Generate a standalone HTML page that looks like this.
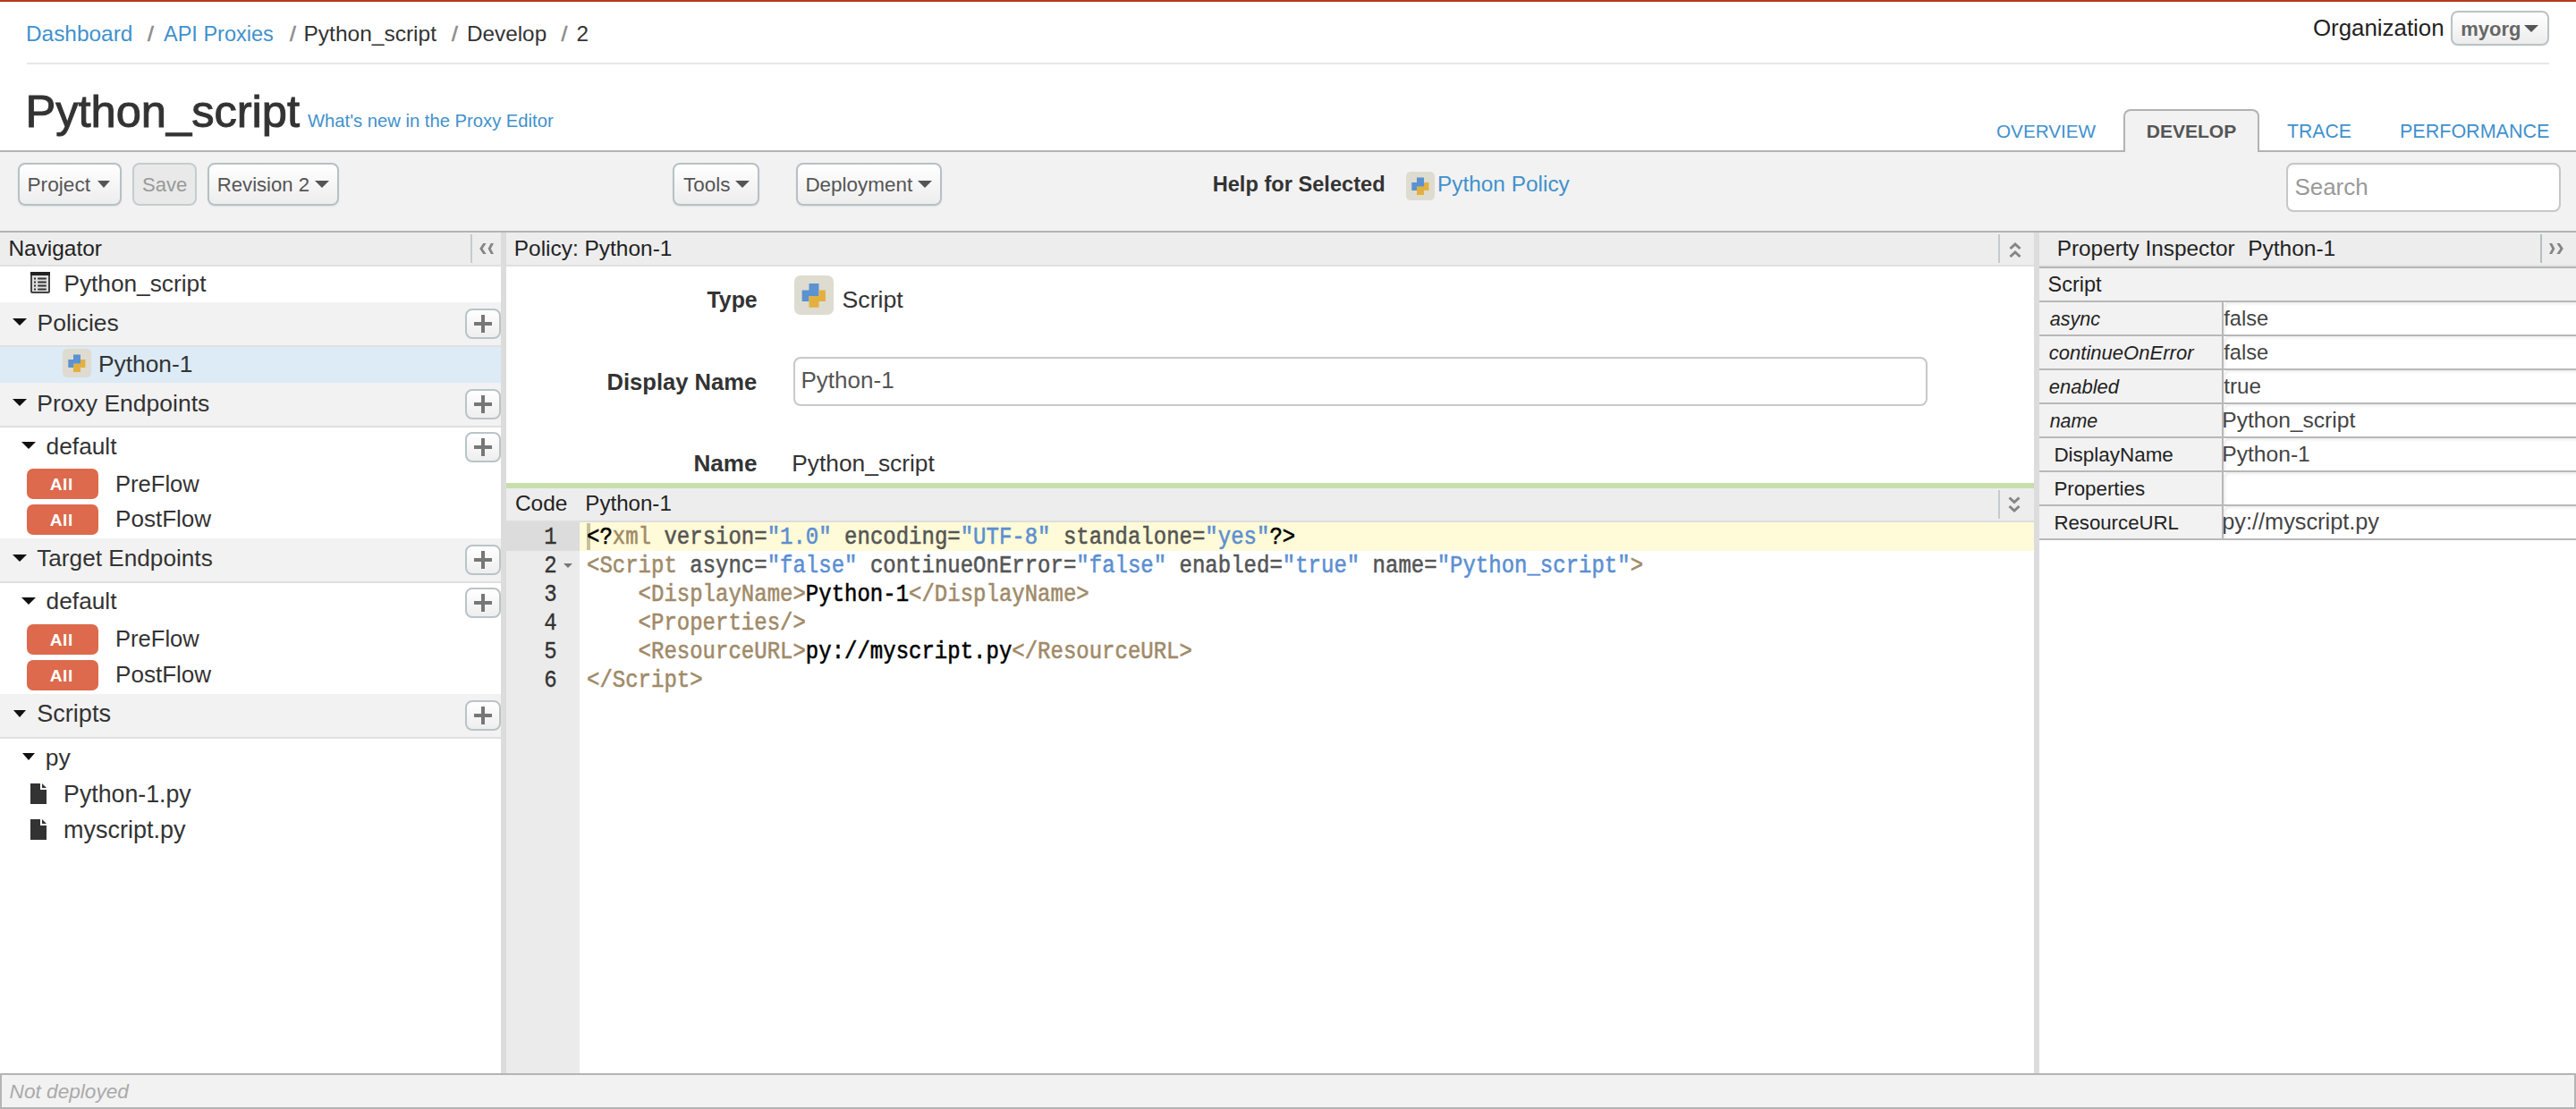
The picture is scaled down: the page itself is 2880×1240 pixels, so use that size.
<!DOCTYPE html><html><head><meta charset="utf-8"><style>
html,body{margin:0;padding:0;width:2880px;height:1240px;overflow:hidden;background:#fff;position:relative}
.a{position:absolute}
.t{white-space:pre}
@media (max-width:1500px){html{zoom:0.5}}
</style></head><body>
<div class="a" style="left:0px;top:0px;width:2880px;height:2px;background:#b33a1c"></div>
<div class="a t" style="left:29.00px;top:13.00px;font-family:'Liberation Sans';font-weight:normal;font-style:normal;font-size:24.406px;line-height:49px;color:#4191cc;">Dashboard</div>
<div class="a t" style="left:183.00px;top:15.00px;font-family:'Liberation Sans';font-weight:normal;font-style:normal;font-size:23.512px;line-height:47px;color:#4191cc;">API Proxies</div>
<div class="a t" style="left:339.50px;top:13.00px;font-family:'Liberation Sans';font-weight:normal;font-style:normal;font-size:24.501px;line-height:49px;color:#333;">Python_script</div>
<div class="a t" style="left:522.00px;top:13.00px;font-family:'Liberation Sans';font-weight:normal;font-style:normal;font-size:24.300px;line-height:49px;color:#333;">Develop</div>
<div class="a t" style="left:644.60px;top:13.00px;font-family:'Liberation Sans';font-weight:normal;font-style:normal;font-size:24.300px;line-height:49px;color:#333;">2</div>
<div class="a t" style="left:165.00px;top:13.00px;font-family:'Liberation Sans';font-weight:normal;font-style:normal;font-size:24.500px;line-height:49px;color:#8c8c8c;-webkit-text-stroke-width:0.6px">/</div>
<div class="a t" style="left:324.00px;top:13.00px;font-family:'Liberation Sans';font-weight:normal;font-style:normal;font-size:24.500px;line-height:49px;color:#8c8c8c;-webkit-text-stroke-width:0.6px">/</div>
<div class="a t" style="left:505.00px;top:13.00px;font-family:'Liberation Sans';font-weight:normal;font-style:normal;font-size:24.500px;line-height:49px;color:#8c8c8c;-webkit-text-stroke-width:0.6px">/</div>
<div class="a t" style="left:627.50px;top:13.00px;font-family:'Liberation Sans';font-weight:normal;font-style:normal;font-size:24.500px;line-height:49px;color:#8c8c8c;-webkit-text-stroke-width:0.6px">/</div>
<div class="a" style="left:30px;top:70px;width:2820px;height:2px;background:#e8e8e8"></div>
<div class="a t" style="left:28.50px;top:74.00px;font-family:'Liberation Sans';font-weight:normal;font-style:normal;font-size:50.600px;line-height:101px;color:#333;-webkit-text-stroke:1px #333">Python_script</div>
<div class="a t" style="left:344.00px;top:115.00px;font-family:'Liberation Sans';font-weight:normal;font-style:normal;font-size:20.237px;line-height:40px;color:#4191cc;">What's new in the Proxy Editor</div>
<div class="a t" style="left:2586.00px;top:5.00px;font-family:'Liberation Sans';font-weight:normal;font-style:normal;font-size:25.874px;line-height:52px;color:#222;">Organization</div>
<div class="a" style="left:2740px;top:12px;width:110px;height:39px;border:2px solid #b9c3c7;border-radius:8px;background:linear-gradient(#ffffff,#ececec);box-sizing:border-box;box-shadow:0 1px 2px rgba(0,0,0,.06)"></div>
<div class="a t" style="left:2751.30px;top:11.00px;font-family:'Liberation Sans';font-weight:bold;font-style:normal;font-size:21.964px;line-height:44px;color:#666;">myorg</div>
<div class="a" style="left:2822px;top:28px;width:0;height:0;border-left:8.0px solid transparent;border-right:8.0px solid transparent;border-top:8px solid #555"></div>
<div class="a" style="left:2374px;top:122px;width:152px;height:48px;border:2px solid #b3b3b3;border-bottom:none;border-radius:8px 8px 0 0;background:#f2f2f2;box-sizing:border-box;z-index:2"></div>
<div class="a t" style="left:2232.00px;top:126.00px;font-family:'Liberation Sans';font-weight:normal;font-style:normal;font-size:20.706px;line-height:41px;color:#4191cc;">OVERVIEW</div>
<div class="a t" style="left:2399.80px;top:126.00px;font-family:'Liberation Sans';font-weight:bold;font-style:normal;font-size:21.030px;line-height:42px;color:#555;z-index:3">DEVELOP</div>
<div class="a t" style="left:2557.00px;top:126.00px;font-family:'Liberation Sans';font-weight:normal;font-style:normal;font-size:21.200px;line-height:42px;color:#4191cc;">TRACE</div>
<div class="a t" style="left:2683.00px;top:126.00px;font-family:'Liberation Sans';font-weight:normal;font-style:normal;font-size:21.522px;line-height:43px;color:#4191cc;">PERFORMANCE</div>
<div class="a" style="left:0px;top:168px;width:2880px;height:92px;background:#f2f2f2"></div>
<div class="a" style="left:0px;top:168px;width:2880px;height:2px;background:#b3b3b3"></div>
<div class="a" style="left:0px;top:258px;width:2880px;height:2px;background:#b3b3b3"></div>
<div class="a" style="left:20px;top:182px;width:116px;height:48px;border:2px solid #b5c1c5;border-radius:8px;background:linear-gradient(#ffffff,#ededed);box-sizing:border-box;box-shadow:0 1px 2px rgba(0,0,0,.07)"></div>
<div class="a t" style="left:30.50px;top:184.00px;font-family:'Liberation Sans';font-weight:normal;font-style:normal;font-size:22.665px;line-height:45px;color:#555;">Project</div>
<div class="a" style="left:108.5px;top:202px;width:0;height:0;border-left:7.75px solid transparent;border-right:7.75px solid transparent;border-top:8px solid #555"></div>
<div class="a" style="left:148px;top:182px;width:72px;height:48px;border:2px solid #c3cdd0;border-radius:8px;background:#e9e9e9;box-sizing:border-box"></div>
<div class="a t" style="left:159.00px;top:185.00px;font-family:'Liberation Sans';font-weight:normal;font-style:normal;font-size:22.000px;line-height:44px;color:#999;">Save</div>
<div class="a" style="left:232px;top:182px;width:147px;height:48px;border:2px solid #b5c1c5;border-radius:8px;background:linear-gradient(#ffffff,#ededed);box-sizing:border-box;box-shadow:0 1px 2px rgba(0,0,0,.07)"></div>
<div class="a t" style="left:242.80px;top:185.00px;font-family:'Liberation Sans';font-weight:normal;font-style:normal;font-size:22.144px;line-height:44px;color:#555;">Revision 2</div>
<div class="a" style="left:351.5px;top:202px;width:0;height:0;border-left:8.25px solid transparent;border-right:8.25px solid transparent;border-top:8px solid #555"></div>
<div class="a" style="left:752px;top:182px;width:97px;height:48px;border:2px solid #b5c1c5;border-radius:8px;background:linear-gradient(#ffffff,#ededed);box-sizing:border-box;box-shadow:0 1px 2px rgba(0,0,0,.07)"></div>
<div class="a t" style="left:764.00px;top:184.00px;font-family:'Liberation Sans';font-weight:normal;font-style:normal;font-size:22.454px;line-height:45px;color:#555;">Tools</div>
<div class="a" style="left:822px;top:202px;width:0;height:0;border-left:8.0px solid transparent;border-right:8.0px solid transparent;border-top:8px solid #555"></div>
<div class="a" style="left:890px;top:182px;width:163px;height:48px;border:2px solid #b5c1c5;border-radius:8px;background:linear-gradient(#ffffff,#ededed);box-sizing:border-box;box-shadow:0 1px 2px rgba(0,0,0,.07)"></div>
<div class="a t" style="left:900.40px;top:184.00px;font-family:'Liberation Sans';font-weight:normal;font-style:normal;font-size:22.452px;line-height:45px;color:#555;">Deployment</div>
<div class="a" style="left:1026px;top:202px;width:0;height:0;border-left:8.0px solid transparent;border-right:8.0px solid transparent;border-top:8px solid #555"></div>
<div class="a t" style="left:1355.70px;top:183.00px;font-family:'Liberation Sans';font-weight:bold;font-style:normal;font-size:23.613px;line-height:47px;color:#333;">Help for Selected</div>
<svg class="a" style="left:1572px;top:192px" width="32" height="32" viewBox="0 0 32 32"><rect x="0" y="0" width="32" height="32" rx="5.00" fill="#dedbd0"/><path d="M12 6.5h8v10.3h-8zM6.3 12H12v9H6.3z" fill="#5a92d2"/><path d="M12 16.8h8V26h-8zM20 12h5.4v9H20z" fill="#e3b03f"/></svg>
<div class="a t" style="left:1607.00px;top:181.00px;font-family:'Liberation Sans';font-weight:normal;font-style:normal;font-size:24.400px;line-height:49px;color:#4191cc;">Python Policy</div>
<div class="a" style="left:2556px;top:182px;width:307px;height:55px;border:2px solid #c7c7c7;border-radius:8px;background:#fff;box-sizing:border-box;box-shadow:inset 0 1px 2px rgba(0,0,0,.06)"></div>
<div class="a t" style="left:2565.50px;top:183.00px;font-family:'Liberation Sans';font-weight:normal;font-style:normal;font-size:25.935px;line-height:52px;color:#999;">Search</div>
<div class="a" style="left:0px;top:260px;width:560px;height:36px;background:#ededed"></div>
<div class="a" style="left:0px;top:296px;width:560px;height:2px;background:#e0e0e0"></div>
<div class="a t" style="left:9.40px;top:253.00px;font-family:'Liberation Sans';font-weight:normal;font-style:normal;font-size:24.448px;line-height:49px;color:#222;">Navigator</div>
<div class="a" style="left:526px;top:262px;width:2px;height:32px;background:#c3cbcf"></div>
<div class="a" style="left:560px;top:260px;width:6px;height:940px;background:#dcdcdc"></div>
<div class="a" style="left:566px;top:260px;width:1708px;height:36px;background:#ededed"></div>
<div class="a" style="left:566px;top:296px;width:1708px;height:2px;background:#e0e0e0"></div>
<div class="a t" style="left:574.80px;top:253.00px;font-family:'Liberation Sans';font-weight:normal;font-style:normal;font-size:24.442px;line-height:49px;color:#222;">Policy: Python-1</div>
<div class="a" style="left:2234px;top:262px;width:2px;height:32px;background:#c3cbcf"></div>
<div class="a" style="left:2274px;top:260px;width:6px;height:940px;background:#dcdcdc"></div>
<div class="a" style="left:2280px;top:260px;width:600px;height:36px;background:#ededed"></div>
<div class="a" style="left:2280px;top:296px;width:600px;height:2px;background:#e3e3e3"></div>
<div class="a" style="left:2280px;top:298px;width:600px;height:2px;background:#b5b5b5"></div>
<div class="a t" style="left:2299.70px;top:253.00px;font-family:'Liberation Sans';font-weight:normal;font-style:normal;font-size:24.375px;line-height:49px;color:#222;">Property Inspector</div>
<div class="a t" style="left:2513.20px;top:253.00px;font-family:'Liberation Sans';font-weight:normal;font-style:normal;font-size:24.500px;line-height:49px;color:#222;">Python-1</div>
<div class="a" style="left:2840px;top:262px;width:2px;height:32px;background:#b4bfc3"></div>
<svg class="a" style="left:534px;top:270px;z-index:4" width="20" height="16" viewBox="0 0 20 16"><path d="M2.2 8L6.199999999999999 2H9.6L5.6 8L9.6 14H6.199999999999999ZM11.6 8L14.8 2H18L14.8 8L18 14H14.8Z" fill="#858585"/></svg>
<svg class="a" style="left:2848px;top:270px;z-index:4" width="20" height="16" viewBox="0 0 20 16"><g transform="translate(20,0) scale(-1,1)"><path d="M2.2 8L6.199999999999999 2H9.6L5.6 8L9.6 14H6.199999999999999ZM11.6 8L14.8 2H18L14.8 8L18 14H14.8Z" fill="#858585"/></g></svg>
<svg class="a" style="left:2245px;top:270px;z-index:4" width="16" height="20" viewBox="0 0 16 20"><path d="M2.5 8L8 3L13.5 8 M2.5 17L8 12L13.5 17" fill="none" stroke="#858585" stroke-width="3"/></svg>
<svg class="a" style="left:34px;top:304px" width="22" height="24" viewBox="0 0 22 24"><rect x="1" y="1" width="20" height="22" rx="1" fill="#ddd" stroke="#444" stroke-width="2"/><rect x="0" y="0" width="22" height="4" fill="#222"/><g fill="#333"><rect x="4" y="6.5" width="2" height="2"/><rect x="8" y="6.5" width="10" height="2" rx="1"/><rect x="4" y="10.5" width="2" height="2"/><rect x="8" y="10.5" width="10" height="2" rx="1"/><rect x="4" y="14.5" width="2" height="2"/><rect x="8" y="14.5" width="10" height="2" rx="1"/><rect x="4" y="18.5" width="2" height="2"/><rect x="8" y="18.5" width="10" height="2" rx="1"/></g></svg>
<div class="a t" style="left:71.40px;top:291.00px;font-family:'Liberation Sans';font-weight:normal;font-style:normal;font-size:26.267px;line-height:53px;color:#333;">Python_script</div>
<div class="a" style="left:0px;top:338px;width:560px;height:48px;background:#f2f2f2"></div>
<div class="a" style="left:0px;top:386px;width:560px;height:2px;background:#e0e0e0"></div>
<div class="a" style="left:14px;top:355.5px;width:0;height:0;border-left:8.0px solid transparent;border-right:8.0px solid transparent;border-top:8.0px solid #111"></div>
<div class="a t" style="left:41.50px;top:335.00px;font-family:'Liberation Sans';font-weight:normal;font-style:normal;font-size:26.500px;line-height:53px;color:#333;">Policies</div>
<div class="a" style="left:520px;top:345px;width:40px;height:34px;border:2px solid #b9c4c8;border-radius:8px;background:linear-gradient(#ffffff,#eeeeee);box-sizing:border-box"></div>
<div class="a" style="left:530px;top:360.0px;width:20px;height:4.0px;background:#777"></div>
<div class="a" style="left:538px;top:352.0px;width:4px;height:20.0px;background:#777"></div>
<div class="a" style="left:0px;top:388px;width:560px;height:40px;background:#dcebf6"></div>
<svg class="a" style="left:70px;top:390px" width="32" height="32" viewBox="0 0 32 32"><rect x="0" y="0" width="32" height="32" rx="5.00" fill="#dedbd0"/><path d="M12 6.5h8v10.3h-8zM6.3 12H12v9H6.3z" fill="#5a92d2"/><path d="M12 16.8h8V26h-8zM20 12h5.4v9H20z" fill="#e3b03f"/></svg>
<div class="a t" style="left:110.00px;top:381.00px;font-family:'Liberation Sans';font-weight:normal;font-style:normal;font-size:26.320px;line-height:53px;color:#333;">Python-1</div>
<div class="a" style="left:0px;top:428px;width:560px;height:48px;background:#f2f2f2"></div>
<div class="a" style="left:0px;top:476px;width:560px;height:2px;background:#e0e0e0"></div>
<div class="a" style="left:14px;top:446px;width:0;height:0;border-left:8.0px solid transparent;border-right:8.0px solid transparent;border-top:8px solid #111"></div>
<div class="a t" style="left:41.30px;top:425.00px;font-family:'Liberation Sans';font-weight:normal;font-style:normal;font-size:26.500px;line-height:53px;color:#333;">Proxy Endpoints</div>
<div class="a" style="left:520px;top:435px;width:40px;height:34px;border:2px solid #b9c4c8;border-radius:8px;background:linear-gradient(#ffffff,#eeeeee);box-sizing:border-box"></div>
<div class="a" style="left:530px;top:450.0px;width:20px;height:4.0px;background:#777"></div>
<div class="a" style="left:538px;top:442.0px;width:4px;height:20.0px;background:#777"></div>
<div class="a" style="left:24px;top:494px;width:0;height:0;border-left:8.0px solid transparent;border-right:8.0px solid transparent;border-top:8.5px solid #111"></div>
<div class="a t" style="left:51.60px;top:473.00px;font-family:'Liberation Sans';font-weight:normal;font-style:normal;font-size:26.299px;line-height:53px;color:#333;">default</div>
<div class="a" style="left:520px;top:482.5px;width:40px;height:34.0px;border:2px solid #b9c4c8;border-radius:8px;background:linear-gradient(#ffffff,#eeeeee);box-sizing:border-box"></div>
<div class="a" style="left:530px;top:497.5px;width:20px;height:4.0px;background:#777"></div>
<div class="a" style="left:538px;top:489.5px;width:4px;height:20.0px;background:#777"></div>
<div class="a" style="left:30px;top:524px;width:80px;height:34px;background:#dd6a4c;border-radius:7px"></div>
<div class="a t" style="left:55.70px;top:523.00px;font-family:'Liberation Sans';font-weight:bold;font-style:normal;font-size:19.200px;line-height:38px;color:#fff;letter-spacing:0.5px">All</div>
<div class="a t" style="left:129.00px;top:516.00px;font-family:'Liberation Sans';font-weight:normal;font-style:normal;font-size:25.572px;line-height:51px;color:#333;">PreFlow</div>
<div class="a" style="left:30px;top:564px;width:80px;height:34px;background:#dd6a4c;border-radius:7px"></div>
<div class="a t" style="left:55.70px;top:563.00px;font-family:'Liberation Sans';font-weight:bold;font-style:normal;font-size:19.200px;line-height:38px;color:#fff;letter-spacing:0.5px">All</div>
<div class="a t" style="left:129.00px;top:554.00px;font-family:'Liberation Sans';font-weight:normal;font-style:normal;font-size:26.072px;line-height:52px;color:#333;">PostFlow</div>
<div class="a" style="left:0px;top:602px;width:560px;height:48px;background:#f2f2f2"></div>
<div class="a" style="left:0px;top:650px;width:560px;height:2px;background:#e0e0e0"></div>
<div class="a" style="left:14px;top:620px;width:0;height:0;border-left:8.0px solid transparent;border-right:8.0px solid transparent;border-top:8px solid #111"></div>
<div class="a t" style="left:41.20px;top:598.00px;font-family:'Liberation Sans';font-weight:normal;font-style:normal;font-size:26.204px;line-height:52px;color:#333;">Target Endpoints</div>
<div class="a" style="left:520px;top:609px;width:40px;height:34px;border:2px solid #b9c4c8;border-radius:8px;background:linear-gradient(#ffffff,#eeeeee);box-sizing:border-box"></div>
<div class="a" style="left:530px;top:624.0px;width:20px;height:4.0px;background:#777"></div>
<div class="a" style="left:538px;top:616.0px;width:4px;height:20.0px;background:#777"></div>
<div class="a" style="left:24px;top:667.6px;width:0;height:0;border-left:8.0px solid transparent;border-right:8.0px solid transparent;border-top:8.399999999999977px solid #111"></div>
<div class="a t" style="left:51.60px;top:646.00px;font-family:'Liberation Sans';font-weight:normal;font-style:normal;font-size:26.299px;line-height:53px;color:#333;">default</div>
<div class="a" style="left:520px;top:656.5px;width:40px;height:34.5px;border:2px solid #b9c4c8;border-radius:8px;background:linear-gradient(#ffffff,#eeeeee);box-sizing:border-box"></div>
<div class="a" style="left:530px;top:671.75px;width:20px;height:4.0px;background:#777"></div>
<div class="a" style="left:538px;top:663.75px;width:4px;height:20.0px;background:#777"></div>
<div class="a" style="left:30px;top:698px;width:80px;height:34px;background:#dd6a4c;border-radius:7px"></div>
<div class="a t" style="left:55.70px;top:697.00px;font-family:'Liberation Sans';font-weight:bold;font-style:normal;font-size:19.200px;line-height:38px;color:#fff;letter-spacing:0.5px">All</div>
<div class="a t" style="left:129.00px;top:689.00px;font-family:'Liberation Sans';font-weight:normal;font-style:normal;font-size:25.572px;line-height:51px;color:#333;">PreFlow</div>
<div class="a" style="left:30px;top:738px;width:80px;height:34px;background:#dd6a4c;border-radius:7px"></div>
<div class="a t" style="left:55.70px;top:737.00px;font-family:'Liberation Sans';font-weight:bold;font-style:normal;font-size:19.200px;line-height:38px;color:#fff;letter-spacing:0.5px">All</div>
<div class="a t" style="left:129.00px;top:728.00px;font-family:'Liberation Sans';font-weight:normal;font-style:normal;font-size:26.072px;line-height:52px;color:#333;">PostFlow</div>
<div class="a" style="left:0px;top:776px;width:560px;height:48px;background:#f2f2f2"></div>
<div class="a" style="left:0px;top:824px;width:560px;height:2px;background:#e0e0e0"></div>
<div class="a" style="left:14.5px;top:794.3px;width:0;height:0;border-left:7.75px solid transparent;border-right:7.75px solid transparent;border-top:8.0px solid #111"></div>
<div class="a t" style="left:41.20px;top:771.00px;font-family:'Liberation Sans';font-weight:normal;font-style:normal;font-size:27.104px;line-height:54px;color:#333;">Scripts</div>
<div class="a" style="left:520px;top:782.5px;width:40px;height:34.5px;border:2px solid #b9c4c8;border-radius:8px;background:linear-gradient(#ffffff,#eeeeee);box-sizing:border-box"></div>
<div class="a" style="left:530px;top:797.75px;width:20px;height:4.0px;background:#777"></div>
<div class="a" style="left:538px;top:789.75px;width:4px;height:20.0px;background:#777"></div>
<div class="a" style="left:24.6px;top:842.3px;width:0;height:0;border-left:7.699999999999999px solid transparent;border-right:7.699999999999999px solid transparent;border-top:8.200000000000045px solid #111"></div>
<div class="a t" style="left:50.70px;top:821.00px;font-family:'Liberation Sans';font-weight:normal;font-style:normal;font-size:26.500px;line-height:53px;color:#333;">py</div>
<svg class="a" style="left:34px;top:876.3px" width="18" height="23" viewBox="0 0 18 23"><path d="M0 0H11V7H18V23H0Z" fill="#333"/><path d="M13 0L18 5H13Z" fill="#333"/></svg>
<div class="a t" style="left:71.10px;top:862.00px;font-family:'Liberation Sans';font-weight:normal;font-style:normal;font-size:26.738px;line-height:53px;color:#333;">Python-1.py</div>
<svg class="a" style="left:34px;top:916.3px" width="18" height="23" viewBox="0 0 18 23"><path d="M0 0H11V7H18V23H0Z" fill="#333"/><path d="M13 0L18 5H13Z" fill="#333"/></svg>
<div class="a t" style="left:71.10px;top:901.00px;font-family:'Liberation Sans';font-weight:normal;font-style:normal;font-size:26.960px;line-height:54px;color:#333;">myscript.py</div>
<div class="a t" style="left:790.50px;top:310.00px;font-family:'Liberation Sans';font-weight:bold;font-style:normal;font-size:24.874px;line-height:50px;color:#333;">Type</div>
<svg class="a" style="left:888.4px;top:308.2px" width="44" height="44" viewBox="0 0 32 32"><rect x="0" y="0" width="32" height="32" rx="5.09" fill="#dedbd0"/><path d="M12 6.5h8v10.3h-8zM6.3 12H12v9H6.3z" fill="#5a92d2"/><path d="M12 16.8h8V26h-8zM20 12h5.4v9H20z" fill="#e3b03f"/></svg>
<div class="a t" style="left:941.50px;top:309.00px;font-family:'Liberation Sans';font-weight:normal;font-style:normal;font-size:26.698px;line-height:53px;color:#333;">Script</div>
<div class="a t" style="left:678.50px;top:402.00px;font-family:'Liberation Sans';font-weight:bold;font-style:normal;font-size:25.578px;line-height:51px;color:#333;">Display Name</div>
<div class="a" style="left:886.6px;top:398.5px;width:1268.7000000000003px;height:55.19999999999999px;border:2px solid #c9c9c9;border-radius:8px;background:#fff;box-sizing:border-box;box-shadow:inset 0 1px 2px rgba(0,0,0,.05)"></div>
<div class="a t" style="left:895.40px;top:399.00px;font-family:'Liberation Sans';font-weight:normal;font-style:normal;font-size:26.063px;line-height:52px;color:#555;">Python-1</div>
<div class="a t" style="left:775.50px;top:492.00px;font-family:'Liberation Sans';font-weight:bold;font-style:normal;font-size:26.109px;line-height:52px;color:#333;">Name</div>
<div class="a t" style="left:885.30px;top:492.00px;font-family:'Liberation Sans';font-weight:normal;font-style:normal;font-size:26.333px;line-height:53px;color:#333;">Python_script</div>
<div class="a" style="left:566px;top:540px;width:1708px;height:6px;background:#c7dfab"></div>
<div class="a" style="left:566px;top:546px;width:1708px;height:36px;background:#ededed"></div>
<div class="a" style="left:566px;top:582px;width:1708px;height:2px;background:#dedede"></div>
<div class="a t" style="left:575.90px;top:538.00px;font-family:'Liberation Sans';font-weight:normal;font-style:normal;font-size:24.471px;line-height:49px;color:#222;">Code</div>
<div class="a t" style="left:654.30px;top:539.00px;font-family:'Liberation Sans';font-weight:normal;font-style:normal;font-size:24.123px;line-height:48px;color:#222;">Python-1</div>
<div class="a" style="left:2234px;top:548px;width:2px;height:32px;background:#c3cbcf"></div>
<svg class="a" style="left:2244px;top:554px;z-index:4" width="16" height="20" viewBox="0 0 16 20"><path d="M2.5 2.5L8 7.5L13.5 2.5 M2.5 12L8 17L13.5 12" fill="none" stroke="#858585" stroke-width="3"/></svg>
<div class="a" style="left:566px;top:584px;width:82px;height:616px;background:#ebebeb"></div>
<div class="a" style="left:566px;top:584px;width:82px;height:32px;background:#dcdcdc"></div>
<div class="a" style="left:648px;top:584px;width:1626px;height:32px;background:#fffad7"></div>
<div class="a" style="left:656px;top:585px;width:4px;height:30px;background:#c5c09d"></div>
<div class="a t" style="left:608.30px;top:578.00px;font-family:'Liberation Mono';font-weight:normal;font-style:normal;font-size:24.000px;line-height:48px;color:#333;transform:scaleY(1.17);transform-origin:0 30px;-webkit-text-stroke-width:0.3px">1</div>
<div class="a t" style="left:608.30px;top:610.00px;font-family:'Liberation Mono';font-weight:normal;font-style:normal;font-size:24.000px;line-height:48px;color:#333;transform:scaleY(1.17);transform-origin:0 30px;-webkit-text-stroke-width:0.3px">2</div>
<div class="a t" style="left:608.30px;top:642.00px;font-family:'Liberation Mono';font-weight:normal;font-style:normal;font-size:24.000px;line-height:48px;color:#333;transform:scaleY(1.17);transform-origin:0 30px;-webkit-text-stroke-width:0.3px">3</div>
<div class="a t" style="left:608.30px;top:674.00px;font-family:'Liberation Mono';font-weight:normal;font-style:normal;font-size:24.000px;line-height:48px;color:#333;transform:scaleY(1.17);transform-origin:0 30px;-webkit-text-stroke-width:0.3px">4</div>
<div class="a t" style="left:608.30px;top:706.00px;font-family:'Liberation Mono';font-weight:normal;font-style:normal;font-size:24.000px;line-height:48px;color:#333;transform:scaleY(1.17);transform-origin:0 30px;-webkit-text-stroke-width:0.3px">5</div>
<div class="a t" style="left:608.30px;top:738.00px;font-family:'Liberation Mono';font-weight:normal;font-style:normal;font-size:24.000px;line-height:48px;color:#333;transform:scaleY(1.17);transform-origin:0 30px;-webkit-text-stroke-width:0.3px">6</div>
<div class="a" style="left:630px;top:630px;width:0;height:0;border-left:5.0px solid transparent;border-right:5.0px solid transparent;border-top:5.5px solid #777"></div>
<div class="a t" style="left:656px;top:586.00px;font-family:'Liberation Mono';font-size:24px;line-height:32px;-webkit-text-stroke-width:0.5px;transform:scaleY(1.15);transform-origin:0 22px"><span style="color:#000">&lt;?</span><span style="color:#a08a68">xml</span><span style="color:#555"> version=</span><span style="color:#5b8fd2">"1.0"</span><span style="color:#555"> encoding=</span><span style="color:#5b8fd2">"UTF-8"</span><span style="color:#555"> standalone=</span><span style="color:#5b8fd2">"yes"</span><span style="color:#000">?&gt;</span></div>
<div class="a t" style="left:656px;top:618.00px;font-family:'Liberation Mono';font-size:24px;line-height:32px;-webkit-text-stroke-width:0.5px;transform:scaleY(1.15);transform-origin:0 22px"><span style="color:#a08a68">&lt;Script</span><span style="color:#555"> async=</span><span style="color:#5b8fd2">"false"</span><span style="color:#555"> continueOnError=</span><span style="color:#5b8fd2">"false"</span><span style="color:#555"> enabled=</span><span style="color:#5b8fd2">"true"</span><span style="color:#555"> name=</span><span style="color:#5b8fd2">"Python_script"</span><span style="color:#a08a68">&gt;</span></div>
<div class="a t" style="left:656px;top:650.00px;font-family:'Liberation Mono';font-size:24px;line-height:32px;-webkit-text-stroke-width:0.5px;transform:scaleY(1.15);transform-origin:0 22px"><span style="color:#000">    </span><span style="color:#a08a68">&lt;DisplayName&gt;</span><span style="color:#000">Python-1</span><span style="color:#a08a68">&lt;/DisplayName&gt;</span></div>
<div class="a t" style="left:656px;top:682.00px;font-family:'Liberation Mono';font-size:24px;line-height:32px;-webkit-text-stroke-width:0.5px;transform:scaleY(1.15);transform-origin:0 22px"><span style="color:#000">    </span><span style="color:#a08a68">&lt;Properties/&gt;</span></div>
<div class="a t" style="left:656px;top:714.00px;font-family:'Liberation Mono';font-size:24px;line-height:32px;-webkit-text-stroke-width:0.5px;transform:scaleY(1.15);transform-origin:0 22px"><span style="color:#000">    </span><span style="color:#a08a68">&lt;ResourceURL&gt;</span><span style="color:#000">py://myscript.py</span><span style="color:#a08a68">&lt;/ResourceURL&gt;</span></div>
<div class="a t" style="left:656px;top:746.00px;font-family:'Liberation Mono';font-size:24px;line-height:32px;-webkit-text-stroke-width:0.5px;transform:scaleY(1.15);transform-origin:0 22px"><span style="color:#a08a68">&lt;/Script&gt;</span></div>
<div class="a" style="left:2280px;top:300px;width:600px;height:36px;background:#f2f2f2"></div>
<div class="a t" style="left:2289.60px;top:295.00px;font-family:'Liberation Sans';font-weight:normal;font-style:normal;font-size:23.461px;line-height:47px;color:#222;">Script</div>
<div class="a" style="left:2280px;top:338px;width:204px;height:36px;background:#f2f2f2"></div>
<div class="a" style="left:2486px;top:338px;width:394px;height:36px;background:#fff;border-top-left-radius:5px;box-shadow:inset 2px 2px 3px rgba(0,0,0,.07)"></div>
<div class="a t" style="left:2291.70px;top:335.00px;font-family:'Liberation Sans';font-weight:normal;font-style:italic;font-size:21.605px;line-height:43px;color:#222;">async</div>
<div class="a t" style="left:2486.30px;top:333.00px;font-family:'Liberation Sans';font-weight:normal;font-style:normal;font-size:23.633px;line-height:47px;color:#444;">false</div>
<div class="a" style="left:2280px;top:376px;width:204px;height:36px;background:#f2f2f2"></div>
<div class="a" style="left:2486px;top:376px;width:394px;height:36px;background:#fff;border-top-left-radius:5px;box-shadow:inset 2px 2px 3px rgba(0,0,0,.07)"></div>
<div class="a t" style="left:2290.70px;top:373.00px;font-family:'Liberation Sans';font-weight:normal;font-style:italic;font-size:22.073px;line-height:44px;color:#222;">continueOnError</div>
<div class="a t" style="left:2486.30px;top:371.00px;font-family:'Liberation Sans';font-weight:normal;font-style:normal;font-size:23.633px;line-height:47px;color:#444;">false</div>
<div class="a" style="left:2280px;top:414px;width:204px;height:36px;background:#f2f2f2"></div>
<div class="a" style="left:2486px;top:414px;width:394px;height:36px;background:#fff;border-top-left-radius:5px;box-shadow:inset 2px 2px 3px rgba(0,0,0,.07)"></div>
<div class="a t" style="left:2290.70px;top:411.00px;font-family:'Liberation Sans';font-weight:normal;font-style:italic;font-size:22.015px;line-height:44px;color:#222;">enabled</div>
<div class="a t" style="left:2486.30px;top:408.00px;font-family:'Liberation Sans';font-weight:normal;font-style:normal;font-size:24.210px;line-height:48px;color:#444;">true</div>
<div class="a" style="left:2280px;top:452px;width:204px;height:36px;background:#f2f2f2"></div>
<div class="a" style="left:2486px;top:452px;width:394px;height:36px;background:#fff;border-top-left-radius:5px;box-shadow:inset 2px 2px 3px rgba(0,0,0,.07)"></div>
<div class="a t" style="left:2291.70px;top:450.00px;font-family:'Liberation Sans';font-weight:normal;font-style:italic;font-size:21.417px;line-height:43px;color:#222;">name</div>
<div class="a t" style="left:2484.30px;top:445.00px;font-family:'Liberation Sans';font-weight:normal;font-style:normal;font-size:24.599px;line-height:49px;color:#444;">Python_script</div>
<div class="a" style="left:2280px;top:490px;width:204px;height:36px;background:#f2f2f2"></div>
<div class="a" style="left:2486px;top:490px;width:394px;height:36px;background:#fff;border-top-left-radius:5px;box-shadow:inset 2px 2px 3px rgba(0,0,0,.07)"></div>
<div class="a t" style="left:2296.40px;top:486.00px;font-family:'Liberation Sans';font-weight:normal;font-style:normal;font-size:22.445px;line-height:45px;color:#222;">DisplayName</div>
<div class="a t" style="left:2484.30px;top:483.00px;font-family:'Liberation Sans';font-weight:normal;font-style:normal;font-size:24.619px;line-height:49px;color:#444;">Python-1</div>
<div class="a" style="left:2280px;top:528px;width:204px;height:36px;background:#f2f2f2"></div>
<div class="a" style="left:2486px;top:528px;width:394px;height:36px;background:#fff;border-top-left-radius:5px;box-shadow:inset 2px 2px 3px rgba(0,0,0,.07)"></div>
<div class="a t" style="left:2296.40px;top:524.00px;font-family:'Liberation Sans';font-weight:normal;font-style:normal;font-size:22.326px;line-height:45px;color:#222;">Properties</div>
<div class="a" style="left:2280px;top:566px;width:204px;height:36px;background:#f2f2f2"></div>
<div class="a" style="left:2486px;top:566px;width:394px;height:36px;background:#fff;border-top-left-radius:5px;box-shadow:inset 2px 2px 3px rgba(0,0,0,.07)"></div>
<div class="a t" style="left:2296.40px;top:563.00px;font-family:'Liberation Sans';font-weight:normal;font-style:normal;font-size:22.230px;line-height:44px;color:#222;">ResourceURL</div>
<div class="a t" style="left:2484.30px;top:558.00px;font-family:'Liberation Sans';font-weight:normal;font-style:normal;font-size:25.311px;line-height:51px;color:#444;">py://myscript.py</div>
<div class="a" style="left:2280px;top:336px;width:600px;height:2px;background:#b8b8b8"></div>
<div class="a" style="left:2280px;top:374px;width:600px;height:2px;background:#b8b8b8"></div>
<div class="a" style="left:2280px;top:412px;width:600px;height:2px;background:#b8b8b8"></div>
<div class="a" style="left:2280px;top:450px;width:600px;height:2px;background:#b8b8b8"></div>
<div class="a" style="left:2280px;top:488px;width:600px;height:2px;background:#b8b8b8"></div>
<div class="a" style="left:2280px;top:526px;width:600px;height:2px;background:#b8b8b8"></div>
<div class="a" style="left:2280px;top:564px;width:600px;height:2px;background:#b8b8b8"></div>
<div class="a" style="left:2280px;top:602px;width:600px;height:2px;background:#b8b8b8"></div>
<div class="a" style="left:2484px;top:338px;width:2px;height:264px;background:#b8b8b8"></div>
<div class="a" style="left:0px;top:1200px;width:2880px;height:40px;background:#f2f2f2;border:2px solid #b4b4b4;box-sizing:border-box"></div>
<div class="a t" style="left:10.60px;top:1198.00px;font-family:'Liberation Sans';font-weight:normal;font-style:italic;font-size:22.634px;line-height:45px;color:#aaa;">Not deployed</div>
</body></html>
